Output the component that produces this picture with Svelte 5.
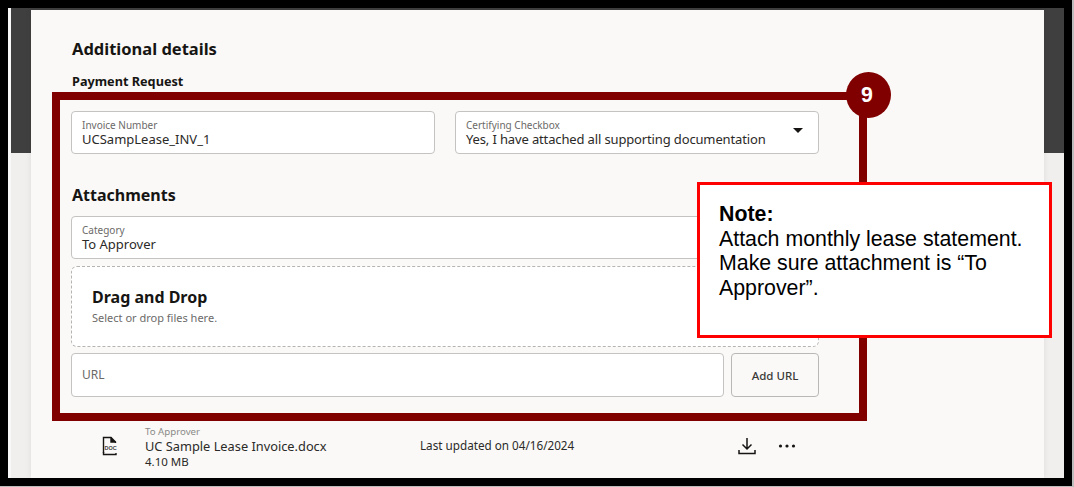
<script>
	let invoice = "UCSampLease_INV_1"
	let category = "To Approver"
	const file = {
		category: "To Approver",
		name: "UC Sample Lease Invoice.docx",
		size: "4.10 MB",
		updated: "Last updated on 04/16/2024",
	}
</script>

<style>
	:global(body) {
		margin: 0;
		background: #bdbdbd;
	}

	.frame {
		position: relative;
		box-sizing: border-box;
		width: 1072px;
		height: 486px;
		padding: 8px 8px 8px 8px;
		background: #000;
		font-family: "Noto Sans", "Open Sans", sans-serif;
		color: #161513;
	}

	.page {
		height: 100%;
		box-sizing: border-box;
		padding: 2px 20px 0 23px;
		background: linear-gradient(90deg, #f8f8f8 3px, transparent 3px), linear-gradient(#3f3f3f 145px, #f0efee 145px);
		background-repeat: no-repeat;
	}

	.card {
		height: 100%;
		box-sizing: border-box;
		padding: 28px 0 0 41px;
		background: #faf9f7;
		box-shadow: 0 0 6px rgba(0, 0, 0, 0.08);
	}

	h2 {
		margin: 0;
		font-size: 16.5px;
		line-height: 22px;
		font-weight: 700;
	}

	h3 {
		margin: 12px 0 0;
		font-size: 12.7px;
		line-height: 18px;
		font-weight: 700;
	}

	.form {
		width: 748px;
		margin-left: -1px;
		margin-top: 21px;
	}

	.row {
		display: grid;
		grid-template-columns: 364px 1fr;
		gap: 20px;
	}

	.field {
		box-sizing: border-box;
		height: 43px;
		position: relative;
		padding: 7px 10px 0;
		background: #fff;
		border: 1px solid #c4c3c1;
		border-radius: 4px;
	}

	.label {
		display: block;
		font-size: 10px;
		line-height: 12px;
		color: #6b6a68;
	}

	.value {
		display: block;
		font-size: 13px;
		line-height: 16px;
		color: #2b2a28;
	}

	.tight {
		letter-spacing: -0.14px;
	}

	.caret {
		position: absolute;
		right: 15px;
		top: 16px;
		width: 0;
		height: 0;
		border-left: 5.5px solid transparent;
		border-right: 5.5px solid transparent;
		border-top: 5.5px solid #161513;
	}

	h2.attach {
		margin: 30px 0 10px 1px;
		font-size: 16px;
	}

	.drop {
		box-sizing: border-box;
		height: 81px;
		margin-top: 7px;
		padding: 20px 20px 0;
		background: #fff;
		border: 1px dashed #b5b4b2;
		border-radius: 6px;
	}

	.drop strong {
		display: block;
		font-size: 16px;
		line-height: 20px;
	}

	.drop span {
		display: block;
		margin-top: 4px;
		font-size: 11px;
		line-height: 14px;
		color: #6b6a68;
	}

	.url-row {
		display: flex;
		gap: 7px;
		margin-top: 6px;
	}

	.url {
		flex: 1;
		height: 44px;
		padding: 0 10px 1px;
		display: flex;
		align-items: center;
		font-size: 12px;
		color: #6b6a68;
	}

	button {
		box-sizing: border-box;
		width: 88px;
		height: 44px;
		padding: 0;
		background: #faf9f7;
		border: 1px solid #b9b8b6;
		border-radius: 4px;
		font: 500 11.5px "Noto Sans", sans-serif;
		color: #3a3937;
	}

	.file {
		display: flex;
		align-items: center;
		margin-top: 26px;
		height: 46px;
		position: relative;
	}

	.doc {
		width: 18px;
		height: 20px;
		margin-left: 29px;
	}

	.meta {
		margin-left: 26px;
		margin-top: 1px;
		width: 275px;
	}

	.meta small {
		display: block;
		font-size: 9.7px;
		line-height: 11px;
		color: #8a8987;
	}

	.meta b {
		display: block;
		font-weight: 400;
		font-size: 12.8px;
		line-height: 18px;
		color: #2b2a28;
	}

	.meta span {
		display: block;
		font-size: 11.5px;
		line-height: 13px;
		color: #2b2a28;
	}

	.updated {
		width: 318px;
		margin-bottom: 2px;
		font-size: 11.7px;
		color: #2b2a28;
	}

	.dots {
		margin-left: 22px;
	}

	/* callouts drawn on top of the form */
	.outline {
		position: absolute;
		left: 52px;
		top: 92px;
		width: 815px;
		height: 329px;
		box-sizing: border-box;
		border: 8px solid #800000;
	}

	.badge {
		position: absolute;
		left: 846px;
		top: 72px;
		width: 45px;
		height: 46px;
		box-sizing: border-box;
		padding-right: 3px;
		border-radius: 50%;
		background: #800000;
		color: #fff;
		font: 700 21.33px/46px "Liberation Sans", Arial, sans-serif;
		text-align: center;
	}

	.note {
		position: absolute;
		left: 697px;
		top: 182px;
		width: 355px;
		height: 156px;
		box-sizing: border-box;
		padding: 17px 19px;
		background: #fff;
		border: 3px solid #f00;
		font: 21.33px/24.7px "Liberation Sans", Arial, sans-serif;
		color: #000;
	}

	.note b {
		display: block;
	}
</style>

<div class="frame">
	<div class="page">
		<div class="card">
			<h2>Additional details</h2>
			<h3>Payment Request</h3>
			<div class="form">
				<div class="row">
					<div class="field">
						<span class="label">Invoice Number</span>
						<span class="value">{invoice}</span>
					</div>
					<div class="field">
						<span class="label">Certifying Checkbox</span>
						<span class="value tight">Yes, I have attached all supporting documentation</span>
						<i class="caret"></i>
					</div>
				</div>
				<h2 class="attach">Attachments</h2>
				<div class="field">
					<span class="label">Category</span>
					<span class="value">{category}</span>
				</div>
				<div class="drop">
					<strong>Drag and Drop</strong>
					<span>Select or drop files here.</span>
				</div>
				<div class="url-row">
					<div class="field url">URL</div>
					<button>Add URL</button>
				</div>
			</div>
			<div class="file">
				<svg class="doc" viewBox="0 0 18 20" fill="none" stroke="#161513">
					<path d="M2.5 17V1.5H10L14.5 6V7" stroke-width="1.4" />
					<path d="M10 1.5V6H14.5" stroke-width="1.4" fill="#161513" />
					<path d="M2.5 16V18.5H15V17" stroke-width="1.4" />
					<text x="3.5" y="14" font-size="5.5" font-weight="700" font-family="Liberation Sans" fill="#444" stroke="none">DOC</text>
				</svg>
				<div class="meta">
					<small>{file.category}</small>
					<b>{file.name}</b>
					<span>{file.size}</span>
				</div>
				<div class="updated">{file.updated}</div>
				<svg width="18" height="18" viewBox="0 0 18 18" fill="none" stroke="#161513" stroke-width="1.5">
					<path d="M9 1V11.5M4.5 7.5L9 12L13.5 7.5M1 13V16.5H17V13" />
				</svg>
				<svg class="dots" width="18" height="4" viewBox="0 0 18 4" fill="#161513">
					<circle cx="2.5" cy="2" r="1.6" />
					<circle cx="9" cy="2" r="1.6" />
					<circle cx="15.5" cy="2" r="1.6" />
				</svg>
			</div>
		</div>
	</div>
	<div class="outline"></div>
	<div class="badge">9</div>
	<div class="note">
		<b>Note:</b>
		Attach monthly lease statement. Make sure attachment is “To Approver”.
	</div>
</div>
